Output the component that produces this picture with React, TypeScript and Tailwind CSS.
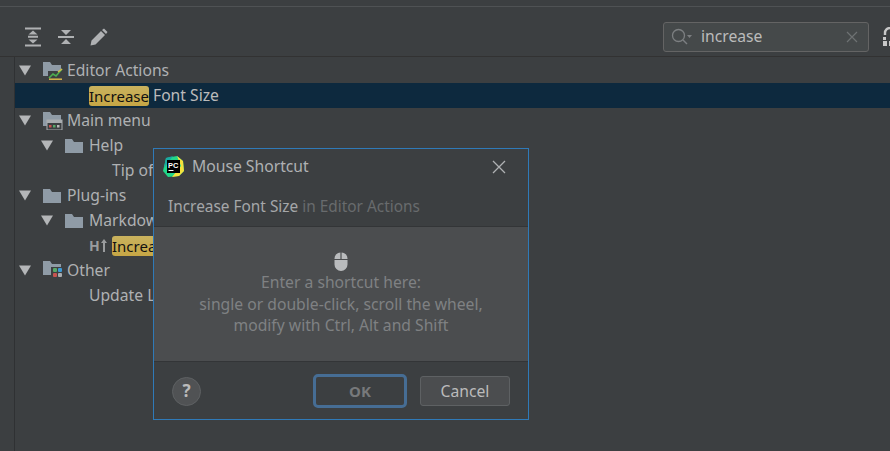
import React from "react";

const font = { fontFamily: '"Noto Sans", "Open Sans", sans-serif' };

function Arrow() {
  return (
    <svg width="12" height="11" viewBox="0 0 12 11" className="shrink-0">
      <path d="M0 0.5H12L6 10.5Z" fill="#b4b6b8" />
    </svg>
  );
}

function Folder() {
  return (
    <svg width="18" height="14" viewBox="0 0 18 14" className="shrink-0">
      <path d="M0 0H7L9 3H18V14H0Z" fill="#8f9ba6" />
    </svg>
  );
}

function EditorFolder() {
  return (
    <svg width="20" height="18" viewBox="0 0 20 18" className="shrink-0">
      <path d="M0 0H7L9 3H18V14H0Z" fill="#8f9ba6" />
      <rect x="5" y="9" width="15" height="9" fill="#3c3f41" />
      <path d="M6 16L10 12L13 14L19 7" stroke="#4caf50" strokeWidth="1.6" fill="none" />
      <path d="M6 17.2H19" stroke="#d8b84a" strokeWidth="1.5" />
      <path d="M15 10L19 7" stroke="#d8b84a" strokeWidth="1.5" />
    </svg>
  );
}

function MenuFolder() {
  return (
    <svg width="20" height="18" viewBox="0 0 20 18" className="shrink-0">
      <path d="M0 0H7L9 3H18V14H0Z" fill="#8f9ba6" />
      <rect x="4" y="8" width="15" height="10" fill="#3c3f41" stroke="#a9adb0" />
      <rect x="4" y="8" width="15" height="3" fill="#a9adb0" />
      <rect x="6" y="13" width="2.5" height="2.5" fill="#c75450" />
      <rect x="10" y="13" width="2.5" height="2.5" fill="#59a869" />
      <rect x="14" y="13" width="2.5" height="2.5" fill="#b9b9b9" />
    </svg>
  );
}

function OtherFolder() {
  return (
    <svg width="20" height="19" viewBox="0 0 20 19" className="shrink-0">
      <path d="M0 0H7L9 3H18V14H0Z" fill="#8f9ba6" />
      <rect x="8" y="6" width="12" height="13" fill="#3c3f41" />
      <rect x="10" y="7" width="4" height="4" rx="1" fill="#59a869" />
      <rect x="15" y="7" width="4" height="4" rx="1" fill="#3d9ad6" />
      <rect x="10" y="12" width="4" height="4" rx="1" fill="#c75450" />
      <rect x="15" y="12" width="4" height="4" rx="1" fill="#a9adb0" />
    </svg>
  );
}

function Row({
  indent,
  arrow,
  icon,
  children,
  selected,
}: {
  indent: number;
  arrow?: boolean;
  icon?: React.ReactNode;
  children: React.ReactNode;
  selected?: boolean;
}) {
  return (
    <div className={`flex h-[25px] items-center whitespace-nowrap ${selected ? "bg-[#0d293e] text-[#bbbbbb]" : "text-[#afb1b3]"}`}>
      <div style={{ width: indent }} className="shrink-0" />
      {arrow && (
        <div className="flex w-[24px] shrink-0 items-center">
          <Arrow />
        </div>
      )}
      {icon && <div className="flex w-[24px] shrink-0 items-center">{icon}</div>}
      {children}
    </div>
  );
}

function Hl({ children }: { children: React.ReactNode }) {
  return (
    <span className="mr-[4px] inline-block h-[20px] rounded-[3px] bg-[linear-gradient(#c9b25e,#c6a645)] text-[15px] leading-[20px] text-[#111111]">
      {children}
    </span>
  );
}

function PyCharmLogo() {
  return (
    <svg width="21" height="21" viewBox="0 0 21 21" className="shrink-0">
      <path d="M3 2L14 0L20 5L21 15L16 20L5 21L0 15Z" fill="#21d789" />
      <path d="M14 0L20 5L21 15L16 20L9 21L18 10Z" fill="#f5e23c" />
      <path d="M3 2L10 0L1 12Z" fill="#1aa9a3" />
      <rect x="4" y="4" width="13" height="13" fill="#000000" />
      <text x="5" y="11.5" fontSize="7.5" fontWeight="700" fill="#ffffff" fontFamily="Liberation Sans">PC</text>
      <rect x="5.5" y="14" width="5" height="1" fill="#ffffff" />
    </svg>
  );
}

export default function App() {
  return (
    <div style={font} className="relative h-[451px] w-[890px] overflow-hidden bg-[#3c3f41] text-[15.7px]">
      <div className="h-[7px] border-b border-[#4f5254]" />
      <div className="flex h-[50px] items-center border-b border-[#323232] pl-[24px] pt-[10px]">
        <div className="flex items-center gap-[16px]">
          <svg width="18" height="20" viewBox="0 0 18 20">
            <path d="M1 1.5H17M1 18.5H17M4 9.8H14" stroke="#afb1b3" strokeWidth="2" fill="none" />
            <path d="M9 3.5L13.5 7.5H4.5ZM9 16.5L4.5 12.5H13.5Z" fill="#afb1b3" />
          </svg>
          <svg width="16" height="20" viewBox="0 0 16 20">
            <path d="M0 10H16" stroke="#afb1b3" strokeWidth="2" />
            <path d="M8 8L3 3H13ZM8 12L13 17H3Z" fill="#afb1b3" />
          </svg>
          <svg width="18" height="18" viewBox="0 0 18 18">
            <path d="M0.5 17.5L1.5 12.5L11 3L15 7L5.5 16.5ZM12 2L14 0.5L17.5 4L16 6Z" fill="#afb1b3" />
          </svg>
        </div>
        <div className="ml-auto flex items-center">
          <div className="flex h-[30px] w-[206px] items-center rounded-[3px] border border-[#646464] bg-[#45494a] pl-[7px] pr-[6px]">
            <svg width="22" height="18" viewBox="0 0 22 18" className="shrink-0">
              <circle cx="7.5" cy="7.5" r="6" stroke="#7c7f81" strokeWidth="1.3" fill="none" />
              <path d="M12 12L16 16" stroke="#7c7f81" strokeWidth="1.5" />
              <path d="M16 7H21L18.5 10Z" fill="#7c7f81" />
            </svg>
            <span className="ml-[8px] pt-[1px] text-[#bbbbbb]">increase</span>
            <svg width="12" height="12" viewBox="0 0 12 12" className="ml-auto mr-[4px]">
              <path d="M1 1L11 11M11 1L1 11" stroke="#6e7173" strokeWidth="1.2" />
            </svg>
          </div>
          <svg width="12" height="20" viewBox="0 0 12 20" className="ml-[13px] mr-[-4px] shrink-0">
            <path d="M3 8V6A5 5 0 0 1 13 6V8" stroke="#c8c8c8" strokeWidth="2.4" fill="none" />
            <rect x="1" y="14" width="4" height="5" fill="#c8c8c8" />
            <rect x="7" y="14" width="5" height="5" fill="#c8c8c8" />
            <rect x="1" y="10" width="3" height="3" fill="#c8c8c8" />
          </svg>
        </div>
      </div>
      <div className="ml-[14px] h-[394px] border-l border-[#2f3133] pt-[1px]">
        <Row indent={4} arrow icon={<EditorFolder />}>Editor Actions</Row>
        <Row indent={74} selected>
          <Hl>Increase</Hl>
          Font Size
        </Row>
        <Row indent={4} arrow icon={<MenuFolder />}>Main menu</Row>
        <Row indent={26} arrow icon={<Folder />}>Help</Row>
        <Row indent={97}>Tip of the Day</Row>
        <Row indent={4} arrow icon={<Folder />}>Plug-ins</Row>
        <Row indent={26} arrow icon={<Folder />}>Markdown</Row>
        <Row indent={74}>
          <span className="flex w-[23px] shrink-0 items-center">
            <span className="text-[14px] font-bold leading-none text-[#9a9c9e]">H</span>
            <svg width="6" height="13" viewBox="0 0 6 13" className="ml-[1px]">
              <path d="M3 0L6 4H4V13H2V4H0Z" fill="#9a9c9e" />
            </svg>
          </span>
          <Hl>Increase Font Size</Hl>
        </Row>
        <Row indent={4} arrow icon={<OtherFolder />}>Other</Row>
        <Row indent={74}>Update Links</Row>
      </div>

      <div className="absolute left-[153px] top-[148px] flex h-[272px] w-[376px] flex-col border border-[#2f7ab8] bg-[#3c3f41]">
        <div className="flex h-[35px] shrink-0 items-center pl-[9px] pr-[22px]">
          <PyCharmLogo />
          <span className="ml-[8px] text-[#afb1b3]">Mouse Shortcut</span>
          <svg width="14" height="14" viewBox="0 0 14 14" className="ml-auto">
            <path d="M1 1L13 13M13 1L1 13" stroke="#afb1b3" strokeWidth="1.3" />
          </svg>
        </div>
        <div className="flex h-[43px] shrink-0 items-center border-b border-[#333537] pl-[14px] pt-[3px] text-[15.4px] text-[#a5a7a9]">
          Increase Font Size<span className="ml-[4px] text-[#686b6d]">in Editor Actions</span>
        </div>
        <div className="flex h-[135px] shrink-0 flex-col items-center border-b border-[#333537] bg-[#4b4d4f] pt-[25px] text-center leading-[21px] text-[#7f8183]">
          <svg width="14" height="19" viewBox="0 0 14 19" className="mb-[1px]">
            <path d="M6.4 0.5V7H0.5V6.5A6 6 0 0 1 6.4 0.5ZM7.6 0.5A6 6 0 0 1 13.5 6.5V7H7.6ZM0.5 8H13.5V12.5A6.5 6.5 0 0 1 0.5 12.5Z" fill="#b9bbbd" />
          </svg>
          <div>Enter a shortcut here:</div>
          <div className="pt-[1px]">single or double-click, scroll the wheel,</div>
          <div>modify with Ctrl, Alt and Shift</div>
        </div>
        <div className="flex flex-1 items-center pl-[18px] pr-[18px] pt-[1px]">
          <div className="flex h-[29px] w-[29px] items-center justify-center rounded-full border border-[#5e6163] bg-[#505254] text-[17px] font-bold text-[#bbbbbb]">?</div>
          <div className="ml-auto flex h-[34px] w-[94px] items-center justify-center rounded-[5px] border-[3px] border-[#466d94] text-[15px] font-bold text-[#77797b]">OK</div>
          <div className="ml-[13px] flex h-[30px] w-[90px] items-center justify-center rounded-[3px] border border-[#5e6163] bg-[#4b4d4f] pt-[1px] text-[#bbbbbb]">Cancel</div>
        </div>
      </div>
    </div>
  );
}
